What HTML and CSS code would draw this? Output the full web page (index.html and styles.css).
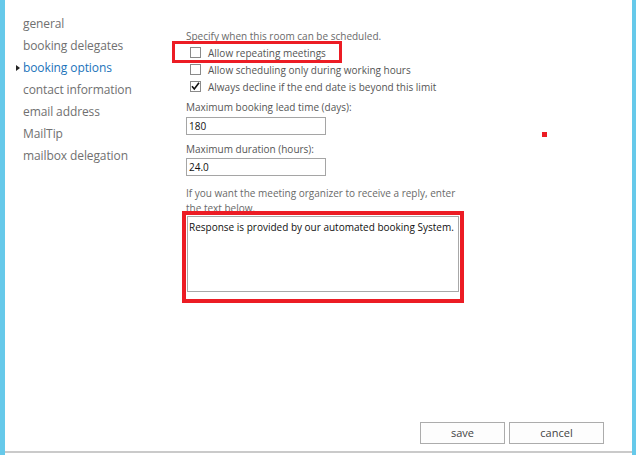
FILE: index.html
```html
<!DOCTYPE html>
<html>
<head>
<meta charset="utf-8">
<link rel="stylesheet" href="styles.css">
</head>
<body>
<div class="window">
  <div class="panel">
    <ul class="nav">
      <li>general</li>
      <li>booking delegates</li>
      <li class="active">booking options</li>
      <li>contact information</li>
      <li>email address</li>
      <li>MailTip</li>
      <li>mailbox delegation</li>
    </ul>
    <div class="content">
      <div class="form">
        <p class="intro">Specify when this room can be scheduled.</p>
        <label class="check"><span class="box"></span>Allow repeating meetings</label>
        <label class="check"><span class="box"></span>Allow scheduling only during working hours</label>
        <label class="check"><span class="box checked"><svg viewBox="0 0 11 11" width="11" height="11"><path d="M2 5.2 L4.3 8 L9 1.8" fill="none" stroke="#111" stroke-width="1.6"/></svg></span>Always decline if the end date is beyond this limit</label>
        <p class="label l1">Maximum booking lead time (days):</p>
        <div class="input">180</div>
        <p class="label l2">Maximum duration (hours):</p>
        <div class="input">24.0</div>
        <p class="note">If you want the meeting organizer to receive a reply, enter<br>the text below.</p>
        <div class="textarea">Response is provided by our automated booking System.</div>
      </div>
      <div class="footer">
        <button class="btn save">save</button>
        <button class="btn cancel">cancel</button>
      </div>
    </div>
    <div class="mark mark1"></div>
    <div class="mark mark2"></div>
    <div class="dot"></div>
  </div>
</div>
</body>
</html>
```
FILE: styles.css
```css
html, body {
  margin: 0;
  padding: 0;
  background: #fff;
}
body {
  font-family: "Open Sans", "Noto Sans", sans-serif;
}
.window {
  width: 636px;
  height: 455px;
  box-sizing: border-box;
  border-left: 5px solid #66c9ea;
  border-right: 4px solid #66c9ea;
}
.panel {
  position: relative;
  height: 453px;
  box-sizing: border-box;
  border-bottom: 2px solid #cacaca;
  display: flex;
}
.nav {
  list-style: none;
  margin: 0;
  width: 181px;
  flex: none;
  box-sizing: border-box;
  padding: 13px 0 0 18px;
  font-size: 12px;
  letter-spacing: -0.1px;
  color: #707070;
}
.nav li {
  position: relative;
  line-height: 22px;
  height: 22px;
}
.nav li.active {
  color: #1b73ba;
}
.nav li.active::before {
  content: "";
  position: absolute;
  left: -7px;
  top: 8px;
  border-left: 4px solid #222;
  border-top: 3.5px solid transparent;
  border-bottom: 3.5px solid transparent;
}
.content {
  flex: 1;
  display: flex;
  flex-direction: column;
}
.form {
  padding-top: 28px;
  font-size: 10px;
  color: #444;
}
.intro {
  margin: 0;
  line-height: 16px;
  color: #6a6a6a;
}
.check {
  display: flex;
  align-items: center;
  height: 17px;
  padding-left: 4px;
  color: #555;
}
.box {
  width: 9px;
  height: 9px;
  border: 1px solid #8a8a8a;
  margin-right: 7px;
  position: relative;
  background: #fff;
}
.box svg {
  position: absolute;
  left: -1px;
  top: -1px;
}
.label {
  margin: 0;
  line-height: 16px;
  color: #555;
}
.l1 { margin-top: 4px; }
.l2 { margin-top: 6px; }
.input {
  margin-top: 2px;
  width: 140px;
  height: 18px;
  box-sizing: border-box;
  border: 1px solid #a5a5a5;
  line-height: 16px;
  padding-left: 2px;
  color: #111;
}
.l2 + .input { margin-top: 1px; }
.note {
  margin: 10px 0 0;
  line-height: 15px;
  color: #6a6a6a;
}
.textarea {
  margin: 0 0 0 1px;
  width: 272px;
  height: 76px;
  box-sizing: border-box;
  border: 1px solid #a8a8a8;
  padding: 3px 1px;
  line-height: 14px;
  color: #111;
}
.footer {
  margin-top: auto;
  display: flex;
  justify-content: flex-end;
  gap: 4px;
  padding: 0 28px 7px 0;
}
.btn {
  height: 22px;
  border: 1px solid #acacac;
  background: #fdfdfd;
  color: #444;
  font-family: "Open Sans", "Noto Sans", sans-serif;
  font-size: 11px;
  line-height: 18px;
  padding: 0;
}
.save { width: 85px; }
.cancel { width: 95px; }
.mark {
  position: absolute;
  box-sizing: border-box;
  border-style: solid;
  border-color: #ec1c24;
}
.mark1 {
  left: 167px;
  top: 41px;
  width: 170px;
  height: 22px;
  border-width: 3px;
}
.mark2 {
  left: 177px;
  top: 211px;
  width: 282px;
  height: 92px;
  border-width: 4px;
}
.dot {
  position: absolute;
  left: 537px;
  top: 132px;
  width: 5px;
  height: 5px;
  background: #ec1c24;
}
```
